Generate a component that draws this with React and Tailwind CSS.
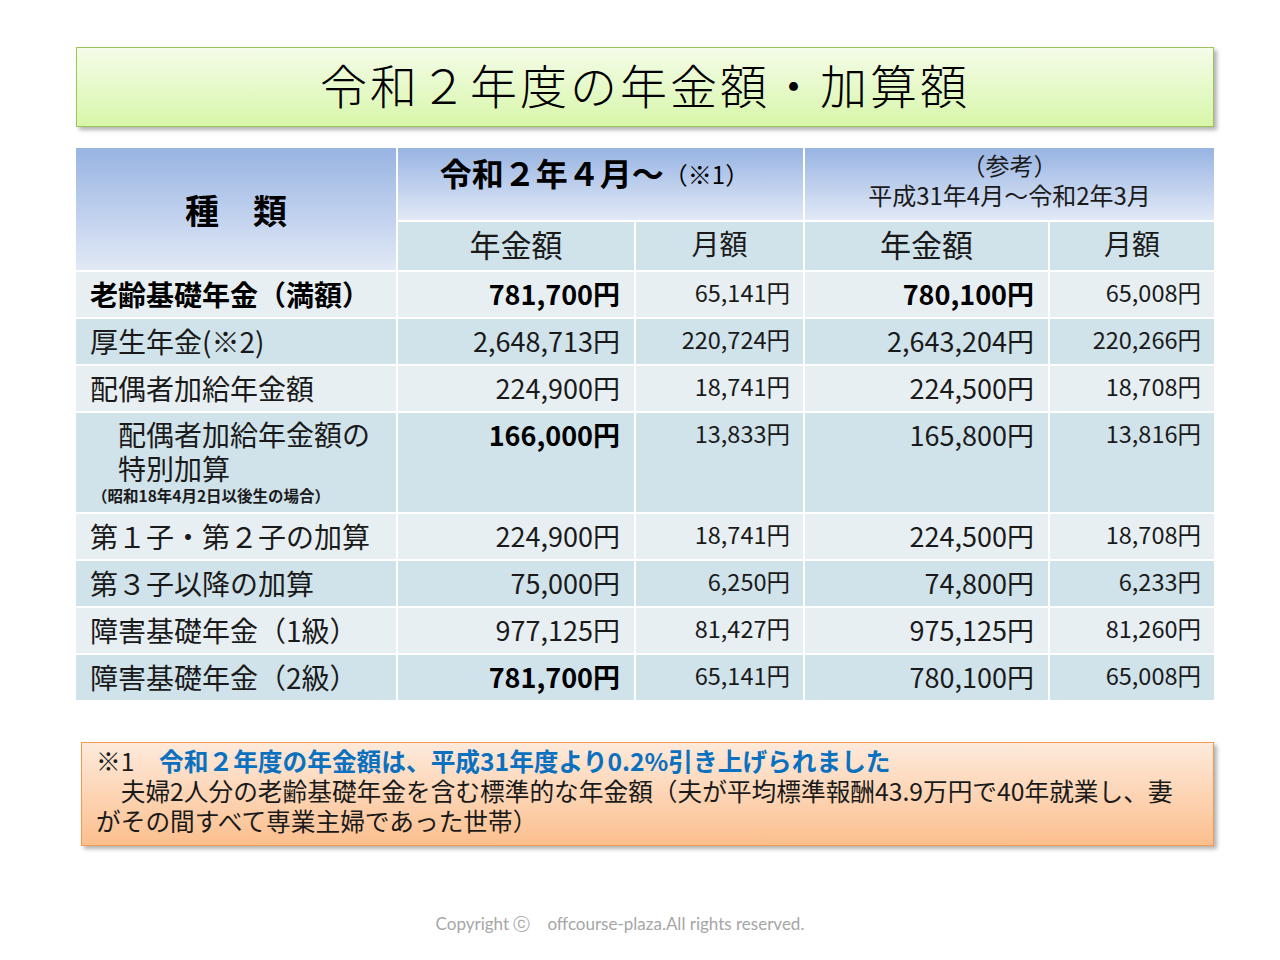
import React from "react";

const rows = [
  { label: "老齢基礎年金（満額）", bold: true, a: "781,700円", aBold: true, m: "65,141円", b: "780,100円", bBold: true, bm: "65,008円" },
  { label: "厚生年金(※2)", a: "2,648,713円", m: "220,724円", b: "2,643,204円", bm: "220,266円" },
  { label: "配偶者加給年金額", a: "224,900円", m: "18,741円", b: "224,500円", bm: "18,708円" },
  { special: true, a: "166,000円", aBold: true, m: "13,833円", b: "165,800円", bm: "13,816円" },
  { label: "第１子・第２子の加算", a: "224,900円", m: "18,741円", b: "224,500円", bm: "18,708円" },
  { label: "第３子以降の加算", a: "75,000円", m: "6,250円", b: "74,800円", bm: "6,233円" },
  { label: "障害基礎年金（1級）", a: "977,125円", m: "81,427円", b: "975,125円", bm: "81,260円" },
  { label: "障害基礎年金（2級）", a: "781,700円", aBold: true, m: "65,141円", b: "780,100円", bm: "65,008円" },
];

function Row({ r, i }) {
  const bg = i % 2 === 0 ? "bg-[#e8eff3]" : "bg-[#d0e2ea]";
  return (
    <>
      <div className={`${bg} pl-[14px] text-[#1a1a1a]`}>
        {r.special ? (
          <div className="pt-[4px]">
            <div className="pl-[28px] text-[28px] leading-[34px]">配偶者加給年金額の</div>
            <div className="pl-[28px] text-[28px] leading-[34px]">特別加算</div>
            <div className="pl-[2px] text-[15.5px] leading-[20px] font-bold">（昭和18年4月2日以後生の場合）</div>
          </div>
        ) : (
          <div className={`text-[28px] leading-[45px] whitespace-nowrap ${r.bold ? "font-bold text-black" : ""}`}>{r.label}</div>
        )}
      </div>
      <div className={`${bg} pr-[14px] text-right text-[27px] leading-[44px] ${r.aBold ? "font-bold text-black" : "text-[#1a1a1a]"}`}>{r.a}</div>
      <div className={`${bg} pr-[13px] text-right text-[23.5px] leading-[40px] text-[#1a1a1a]`}>{r.m}</div>
      <div className={`${bg} pr-[14px] text-right text-[27px] leading-[44px] ${r.bBold ? "font-bold text-black" : "text-[#1a1a1a]"}`}>{r.b}</div>
      <div className={`${bg} pr-[13px] text-right text-[23.5px] leading-[40px] text-[#1a1a1a]`}>{r.bm}</div>
    </>
  );
}

export default function App() {
  return (
    <div className="w-[1280px] h-[960px] bg-white font-['Noto_Sans_CJK_JP',sans-serif] pt-[47px] relative">
      {/* title */}
      <div className="ml-[76px] w-[1138px] h-[80px] border border-[#9dc35d] bg-gradient-to-b from-[#f4fce9] to-[#d8f6a9] shadow-[3px_3px_4px_rgba(0,0,0,0.3)] flex items-center justify-center pb-[8px]">
        <div className="text-[47px] font-light tracking-[3px] text-black leading-none">令和２年度の年金額・加算額</div>
      </div>

      {/* table */}
      <div className="ml-[76px] mt-[21px] w-[1138px] grid grid-cols-[320px_236px_167px_243px_164px] grid-rows-[72px_48px_45px_45px_45px_99px_45px_45px_45px_45px] gap-[2px]">
        <div className="row-span-2 bg-gradient-to-b from-[#98b4e2] to-[#e2e9f6] flex items-center justify-center">
          <span className="text-[34px] font-bold text-black">種　類</span>
        </div>
        <div className="col-span-2 bg-gradient-to-b from-[#98b4e2] to-[#e2e9f6] flex items-start justify-center pt-[2px] pr-[12px]">
          <span className="text-[32px] leading-[44px] font-bold text-black">令和２年４月～</span>
          <span className="text-[24px] leading-[44px] text-black mt-[2px]">（※1）</span>
        </div>
        <div className="col-span-2 bg-gradient-to-b from-[#98b4e2] to-[#e2e9f6] flex flex-col items-center pt-[2px] text-[24px] leading-[30px] text-[#1a1a1a]">
          <div>（参考）</div>
          <div>平成31年4月～令和2年3月</div>
        </div>
        <div className="bg-[#d0e2ea] text-center text-[31px] leading-[44px] text-[#1a1a1a]">年金額</div>
        <div className="bg-[#d0e2ea] text-center text-[28px] leading-[42px] text-[#1a1a1a]">月額</div>
        <div className="bg-[#d0e2ea] text-center text-[31px] leading-[44px] text-[#1a1a1a]">年金額</div>
        <div className="bg-[#d0e2ea] text-center text-[28px] leading-[42px] text-[#1a1a1a]">月額</div>
        {rows.map((r, i) => (
          <Row key={i} r={r} i={i} />
        ))}
      </div>

      {/* note */}
      <div className="ml-[81px] mt-[42px] w-[1133px] h-[104px] border border-[#f59a52] bg-gradient-to-b from-[#fdeadb] to-[#fbbf8e] shadow-[3px_3px_4px_rgba(0,0,0,0.3)] pl-[14px] pt-[2px] text-[24.7px] leading-[30px] text-[#1a1a1a] whitespace-nowrap">
        <div>
          ※1　<span className="font-bold text-[#0a70c0]">令和２年度の年金額は、平成31年度より0.2%引き上げられました</span>
        </div>
        <div>　夫婦2人分の老齢基礎年金を含む標準的な年金額（夫が平均標準報酬43.9万円で40年就業し、妻</div>
        <div>がその間すべて専業主婦であった世帯）</div>
      </div>

      {/* footer */}
      <div className="absolute left-0 w-[1240px] top-[911px] text-center text-[17px] text-[#a6a6a6] font-['Lato',sans-serif]">
        Copyright ⓒ　offcourse-plaza.All rights reserved.
      </div>
    </div>
  );
}
